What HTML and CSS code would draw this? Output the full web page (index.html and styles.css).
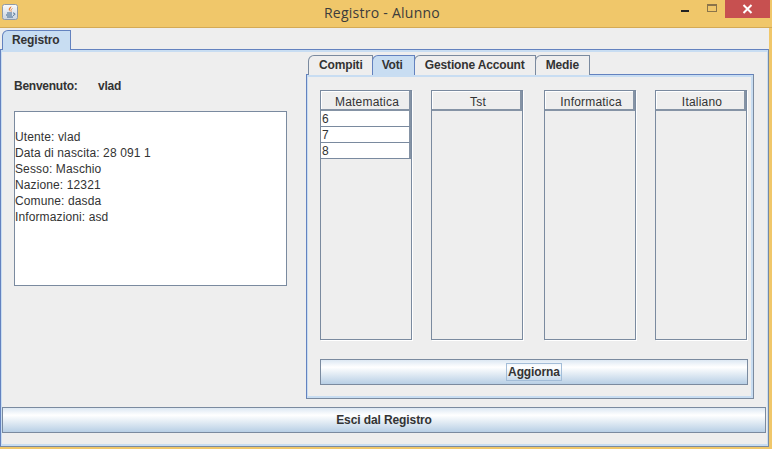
FILE: index.html
```html
<!DOCTYPE html>
<html lang="en">
<head>
  <meta charset="UTF-8">
  <title>Registro - Alunno</title>
  <link rel="stylesheet" href="styles.css">
</head>
<body>
  <div class="window">
    <div class="titlebar">
      <svg class="app-icon" width="16" height="16" viewBox="0 0 16 16">
        <defs>
          <linearGradient id="iconbg" x1="0" y1="0" x2="0" y2="1">
            <stop offset="0" stop-color="#fbfbfb"/>
            <stop offset="1" stop-color="#c9d3e0"/>
          </linearGradient>
        </defs>
        <rect x="0.5" y="0.5" width="15" height="15" rx="2" fill="url(#iconbg)" stroke="#8f9aa8"/>
        <path d="M9.500 2 C6.500 4 6 5.500 7.500 7.500 C7.200 5.500 9 4.500 9.500 2 Z" fill="#e8772a"/>
        <path d="M10.500 4.500 C8.800 5.500 8.500 6.500 9.300 7.800" stroke="#e8772a" stroke-width="0.8" fill="none"/>
        <path d="M5 9 H10 M4 11 H10 M5 13 H11" stroke="#3f668f" stroke-width="1" fill="none"/>
        <path d="M11 9 C13.500 9 13.500 11 11 11.500" stroke="#3f668f" stroke-width="1" fill="none"/>
      </svg>
      <div class="title">Registro - Alunno</div>
      <div class="controls">
        <div class="btn-min"><span></span></div>
        <div class="btn-max"><span></span></div>
        <div class="btn-close">
          <svg width="11" height="10" viewBox="0 0 11 10"><path d="M1.500 1 L9.500 9 M9.500 1 L1.500 9" stroke="#fff" stroke-width="2" fill="none"/></svg>
        </div>
      </div>
    </div>

    <div class="client">
      <div class="tabstrip main-strip">
        <div class="tab selected">Registro</div>
      </div>
      <div class="main-pane">
        <div class="columns">
          <div class="left">
            <div class="welcome"><span class="welcome-label">Benvenuto:</span><span>vlad</span></div>
            <div class="info">
              <div>Utente: vlad</div>
              <div>Data di nascita: 28 091 1</div>
              <div>Sesso: Maschio</div>
              <div>Nazione: 12321</div>
              <div>Comune: dasda</div>
              <div>Informazioni: asd</div>
            </div>
          </div>
          <div class="right">
            <div class="tabstrip inner-strip">
              <div class="tab">Compiti</div>
              <div class="tab selected">Voti</div>
              <div class="tab">Gestione Account</div>
              <div class="tab">Medie</div>
            </div>
            <div class="inner-pane">
              <div class="lists">
                <div class="list w-mat">
                  <div class="list-head">Matematica</div>
                  <div class="list-row">6</div>
                  <div class="list-row">7</div>
                  <div class="list-row">8</div>
                </div>
                <div class="list w-tst"><div class="list-head">Tst</div></div>
                <div class="list w-inf"><div class="list-head">Informatica</div></div>
                <div class="list w-ita"><div class="list-head">Italiano</div></div>
              </div>
              <div class="button refresh"><span class="focus">Aggiorna</span></div>
            </div>
          </div>
        </div>
        <div class="button exit">Esci dal Registro</div>
      </div>
    </div>
  </div>
</body>
</html>
```

FILE: styles.css
```css
* {
  box-sizing: border-box;
}

body {
  margin: 0;
  font-family: "Liberation Sans", Arial, sans-serif;
  font-size: 12px;
  letter-spacing: 0.12px;
  color: #333;
}

.window {
  width: 772px;
  height: 449px;
  display: flex;
  flex-direction: column;
  background: #f0c76a;
  overflow: hidden;
}

/* Title bar */
.titlebar {
  height: 28px;
  flex: none;
  display: flex;
  border-bottom: 1px solid #d4aa55;
}

.app-icon {
  margin: 4px 0 0 2px;
}

.title {
  flex: 1;
  text-align: center;
  padding: 4px 0 0 83px;
  font-family: "Open Sans", "Noto Sans", sans-serif;
  font-size: 14px;
  letter-spacing: 0.25px;
  line-height: 18px;
  color: #3c3c3c;
}

.controls {
  display: flex;
  margin-right: 2px;
}

.btn-min {
  width: 44px;
  padding: 10px 0 0 18px;
}

.btn-min span {
  display: block;
  width: 8px;
  height: 2px;
  background: #222;
}

.btn-max {
  width: 18px;
  padding: 4px 0 0 0;
}

.btn-max span {
  display: block;
  width: 10px;
  height: 8px;
  border: 1px solid #8a744a;
  border-top-width: 2px;
}

.btn-close {
  width: 45px;
  height: 18px;
  background: #c75050;
  display: flex;
  align-items: center;
  justify-content: center;
}

/* Client area */
.client {
  width: 769px;
  height: 419px;
  flex: none;
  display: flex;
  flex-direction: column;
  background: #eee;
}

.tabstrip {
  display: flex;
  flex: none;
}

.main-strip {
  height: 21px;
  padding: 2px 0 0 2px;
}

.main-strip .tab {
  padding: 0 11px 0 9px;
}

.inner-strip {
  height: 20px;
  padding-left: 2px;
  margin-bottom: -1px;
  position: relative;
}

.tab {
  height: 20px;
  padding: 0 10px;
  line-height: 19px;
  font-weight: bold;
  letter-spacing: -0.15px;
  background: #eee;
  border: 1px solid #7a8a9f;
  border-bottom: none;
  border-top-left-radius: 6px;
  margin-right: -1px;
}

.inner-strip .tab:first-child {
  padding-right: 9px;
}

.inner-strip .tab.selected {
  padding: 0 11px 0 9px;
}

.tab.selected {
  background: #c8ddf2;
  border-color: #6382bf;
  position: relative;
}

.main-pane {
  flex: 1;
  display: flex;
  flex-direction: column;
  border-top: 1px solid #6382bf;
  border-left: 1px solid #6382bf;
  border-right: 1px solid #7a8a9f;
  border-bottom: 1px solid #7a8a9f;
  box-shadow: inset 1px 2px 0 #c8ddf2, inset -1px -2px 0 #c8ddf2;
}

.columns {
  flex: 1;
  display: flex;
  padding: 5px 0 0 13px;
}

.left {
  width: 273px;
}

.welcome {
  display: flex;
  font-weight: bold;
  letter-spacing: -0.25px;
  line-height: 16px;
  margin-top: 23px;
}

.welcome-label {
  width: 84px;
}

.info {
  height: 175px;
  margin-top: 17px;
  padding: 17px 0 0 0;
  line-height: 16px;
  background: #fff;
  border: 1px solid #7a8a9f;
  border-width: 1px 0 1px 1px;
  box-shadow: inset -1px 0 0 #7a8a9f;
}

.right {
  width: 448px;
  margin-left: 19px;
}

.inner-pane {
  height: 325px;
  padding: 15px 5px 0 13px;
  border: 1px solid #7a8a9f;
  border-top-color: #6382bf;
  border-left-color: #6382bf;
  box-shadow: inset 1px 2px 0 #c8ddf2, inset -2px -2px 0 #c8ddf2;
}

.lists {
  display: flex;
  height: 250px;
}

.list {
  height: 250px;
  border: 1px solid #7a8a9f;
  box-shadow: 1px 1px 0 #fff;
}

.w-mat { width: 92px; margin-right: 19px; }
.w-tst { width: 92px; margin-right: 21px; }
.w-inf { width: 92px; margin-right: 19px; }
.w-ita { width: 92px; }

.list-head {
  height: 20px;
  line-height: 22px;
  padding-left: 4px;
  text-align: center;
  letter-spacing: 0.2px;
  background: #eee;
  border-right: 2px solid #8593a5;
  border-bottom: 2px solid #8593a5;
  box-shadow: inset 1px 1px 0 #fff;
}

.list-row {
  height: 16px;
  line-height: 17px;
  padding-left: 1px;
  background: #fff;
  border-bottom: 1px solid #7a8a9f;
  border-right: 2px solid #8593a5;
}

.button {
  height: 26px;
  display: flex;
  align-items: center;
  justify-content: center;
  font-weight: bold;
  letter-spacing: -0.1px;
  border: 1px solid #7a8a9f;
  background: linear-gradient(#dde8f3, #fff 30%, #b8cfe5);
}

.refresh {
  width: 428px;
  margin-top: 19px;
}

.focus {
  height: 18px;
  line-height: 16px;
  padding: 0 1px;
  border: 1px solid #a3bdd8;
}

.exit {
  width: 764px;
  margin: 0 0 13px 1px;
}
```
